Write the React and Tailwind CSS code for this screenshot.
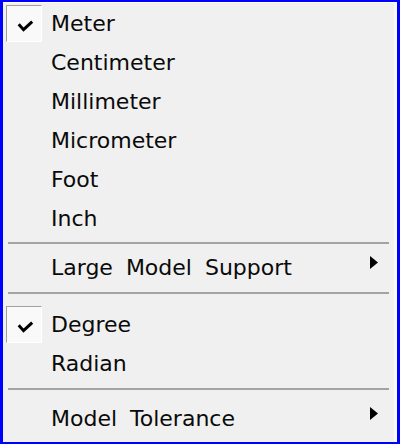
import React from "react";

function Check() {
  return (
    <div className="ml-[3px] w-[36px] h-[37px] border-t border-l border-[#a0a0a0] border-r border-b border-r-white border-b-white bg-[#f9f9f9] flex items-start justify-start">
      <svg width="36" height="37" viewBox="0 0 36 37" className="block">
        <path d="M13.5 19.5 L17.5 24 L25.5 16.5" fill="none" stroke="#000" strokeWidth="3.2" strokeLinecap="square" strokeLinejoin="miter" />
      </svg>
    </div>
  );
}

function Row({ label, checked, sub }) {
  return (
    <div className="flex h-[39px] items-center">
      <div className="w-[48px] h-full flex items-center shrink-0">
        {checked ? <Check /> : null}
      </div>
      <div className="flex-1 leading-[39px] text-[#0a0a0a]">{label}</div>
      {sub ? (
        <div className="self-start mt-[8px] mr-[16px]">
          <svg width="8" height="13" viewBox="0 0 8 13" className="block">
            <path d="M0 0 L8 6.5 L0 13 Z" fill="#000" />
          </svg>
        </div>
      ) : null}
    </div>
  );
}

export default function App() {
  return (
    <div
      className="w-[400px] h-[444px] bg-[#f0f0f0] border-l-[3px] border-r-[3px] border-t-[2px] border-b-[2px] border-[#0000ff] overflow-hidden"
      style={{ fontFamily: '"DejaVu Sans", sans-serif', fontSize: "22px", wordSpacing: "6px" }}
    >
      <div className="h-full border-t border-white border-r-[3px] border-r-[#fafafa] pt-[1px]">
        <Row label="Meter" checked />
        <Row label="Centimeter" />
        <Row label="Millimeter" />
        <Row label="Micrometer" />
        <Row label="Foot" />
        <Row label="Inch" />
        <div className="flex flex-col h-[10px]">
          <div className="mt-[4px] mx-[5px] h-[2px] bg-[#a3a3a3]" />
        </div>
        <Row label="Large Model Support" sub />
        <div className="flex flex-col h-[18px]">
          <div className="mt-[5px] mx-[5px] h-[2px] bg-[#a3a3a3]" />
        </div>
        <Row label="Degree" checked />
        <Row label="Radian" />
        <div className="flex flex-col h-[16px]">
          <div className="mt-[5px] mx-[5px] h-[2px] bg-[#a3a3a3]" />
        </div>
        <Row label="Model Tolerance" sub />
      </div>
    </div>
  );
}
